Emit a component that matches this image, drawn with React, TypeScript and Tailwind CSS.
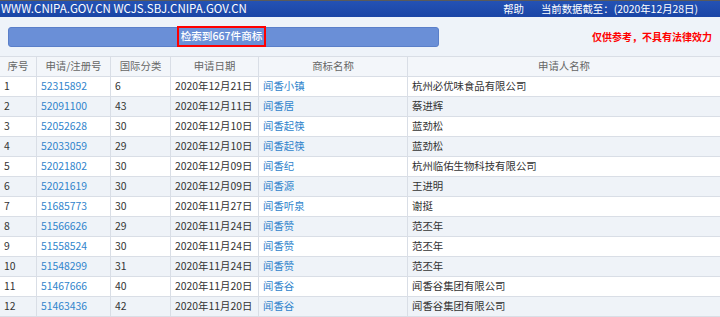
import React from "react";

const rows: [string, string, string, string, string, string][] = [
  ["1", "52315892", "6", "2020年12月21日", "闻香小镇", "杭州必优味食品有限公司"],
  ["2", "52091100", "43", "2020年12月11日", "闻香居", "蔡进辉"],
  ["3", "52052628", "30", "2020年12月10日", "闻香起筷", "蓝劲松"],
  ["4", "52033059", "29", "2020年12月10日", "闻香起筷", "蓝劲松"],
  ["5", "52021802", "30", "2020年12月09日", "闻香纪", "杭州临佑生物科技有限公司"],
  ["6", "52021619", "30", "2020年12月09日", "闻香源", "王进明"],
  ["7", "51685773", "30", "2020年11月27日", "闻香听泉", "谢挺"],
  ["8", "51566626", "29", "2020年11月24日", "闻香赞", "范丕年"],
  ["9", "51558524", "30", "2020年11月24日", "闻香赞", "范丕年"],
  ["10", "51548299", "31", "2020年11月24日", "闻香赞", "范丕年"],
  ["11", "51467666", "40", "2020年11月20日", "闻香谷", "闻香谷集团有限公司"],
  ["12", "51463436", "42", "2020年11月20日", "闻香谷", "闻香谷集团有限公司"],
];

const cols = "grid grid-cols-[37px_74px_60px_88px_149px_1fr]";

export default function App() {
  return (
    <div
      className="w-[720px] h-[317px] overflow-hidden bg-white text-[10.4px] leading-none"
      style={{ fontFamily: '"Noto Sans CJK SC", "Noto Sans", sans-serif' }}
    >
      {/* top bar */}
      <div className="h-[17px] border-t border-[#5a5a5a] bg-gradient-to-b from-[#2452b4] to-[#1a45a6] flex items-center text-white text-[10.4px]">
        <span className="pl-[1px] text-[11.5px]">WWW.CNIPA.GOV.CN WCJS.SBJ.CNIPA.GOV.CN</span>
        <span className="ml-auto">帮助</span>
        <span className="ml-[17px] mr-[22px]">当前数据截至：(2020年12月28日)</span>
      </div>

      {/* panel */}
      <div className="h-[39px] bg-[#eef3f9] flex items-start pt-[10px] pl-[8px]">
        <div className="w-[431px] h-[20px] rounded-[3px] bg-[#6a8fd7] border border-[#5a7fc9] flex items-center justify-center">
          <span className="text-white font-medium text-[10.6px] border-2 border-[#ff0000] h-[21px] px-[2px] flex items-center -mt-[1px] -ml-[4px]">
            检索到667件商标
          </span>
        </div>
        <div className="ml-auto mr-[8px] mt-[5px] text-[#ff0000] font-bold text-[10px]">
          仅供参考，不具有法律效力
        </div>
      </div>

      {/* table */}
      <div className={`${cols} h-[21px] bg-[#f3f6fa] border-b border-t border-[#d9dee6] text-[#666]`}>
        {["序号", "申请/注册号", "国际分类", "申请日期", "商标名称", "申请人名称"].map((h, i) => (
          <div
            key={h}
            className={`flex items-center justify-center ${i < 5 ? "border-r border-[#d9dee6]" : ""}`}
          >
            {h}
          </div>
        ))}
      </div>
      {rows.map((r, idx) => (
        <div
          key={r[0]}
          className={`${cols} h-[20px] border-b border-[#d9dee6] text-[#333] ${
            idx % 2 === 1 ? "bg-[#eff3f8]" : "bg-white"
          }`}
        >
          {r.map((c, i) => (
            <div
              key={i}
              className={`flex items-center pl-[4px] ${i < 5 ? "border-r border-[#d9dee6]" : ""} ${
                i === 1 || i === 4 ? "text-[#2f84cc]" : ""
              }`}
            >
              {c}
            </div>
          ))}
        </div>
      ))}
    </div>
  );
}
